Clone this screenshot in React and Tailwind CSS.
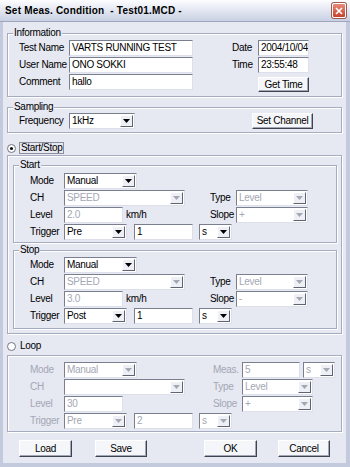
import React from 'react'

const FONT = "font-['Liberation_Sans',Arial,sans-serif]"
const DIM = 'text-[#a4a7b4]'

const Arrow = ({ dis }) => (
    <span className="w-[13px] my-[1px] mr-[1px] flex items-center justify-center bg-[#eef0f5] border-t border-l border-b border-r border-t-white border-l-white border-b-[#5f6372] border-r-[#5f6372]">
        <svg width="7" height="4" viewBox="0 0 7 4">
            <path d="M0 0h7L3.5 4z" fill={dis ? '#a4a7b4' : '#000'} />
        </svg>
    </span>
)

const Select = ({ w, value, dis }) => (
    <div className={`${w} h-[16px] flex items-stretch bg-white border-t border-l border-b border-r border-t-[#7a7f90] border-l-[#7a7f90] border-b-[#dde0ea] border-r-[#dde0ea]`}>
        <span className={`flex-1 pl-[2px] leading-[14px] overflow-hidden ${dis ? DIM : 'text-black'}`}>{value}</span>
        <Arrow dis={dis} />
    </div>
)

const Edit = ({ w, value, dis }) => (
    <div className={`${w} h-[16px] pl-[2px] leading-[14px] overflow-hidden bg-white border-t border-l border-b border-r border-t-[#7a7f90] border-l-[#7a7f90] border-b-[#dde0ea] border-r-[#dde0ea] ${dis ? DIM : 'text-black'}`}>
        {value}
    </div>
)

const Btn = ({ w, h = 'h-[16px]', children }) => (
    <div className={`${w} ${h} flex items-center justify-center bg-[#f5f6f9] border-t border-l border-b border-r border-t-white border-l-white border-b-[#3f4250] border-r-[#3f4250] shadow-[inset_-1px_-1px_0_#a3a7b5]`}>
        {children}
    </div>
)

const Group = ({ label, className, children }) => (
    <div className={`relative box-border border border-[#a6acbf] shadow-[inset_1px_1px_0_#ffffff,1px_1px_0_#ffffff] ${className}`}>
        {label && (
            <span className="absolute -top-[7px] left-[5px] px-[1px] leading-[12px] bg-[#e6e8f2]">{label}</span>
        )}
        {children}
    </div>
)

const Radio = ({ on }) => (
    <svg width="9" height="9" viewBox="0 0 9 9">
        <circle cx="4.5" cy="4.5" r="4" fill="#fff" stroke="#6f7485" strokeWidth="1" />
        {on && <circle cx="4.5" cy="4.5" r="1.6" fill="#111" />}
    </svg>
)

const Row = ({ label, dim, children }) => (
    <div className="flex items-center h-[16px]">
        <span className={`w-[34px] ${dim ? DIM : ''}`}>{label}</span>
        {children}
    </div>
)

const Condition = ({ label, level, slope, trigger, className }) => (
    <Group label={label} className={className}>
        <div className="flex flex-col gap-[1px]">
            <div className="flex">
                <div className="w-[180px]">
                    <Row label="Mode"><Select w="w-[73px]" value="Manual" /></Row>
                </div>
            </div>
            <div className="flex">
                <div className="w-[180px]">
                    <Row label="CH"><Select w="w-[121px]" value="SPEED" dis /></Row>
                </div>
                <div className="flex items-center h-[16px]">
                    <span className="w-[26px]">Type</span>
                    <Select w="w-[72px]" value="Level" dis />
                </div>
            </div>
            <div className="flex">
                <div className="w-[180px]">
                    <Row label="Level">
                        <Edit w="w-[59px]" value={level} dis />
                        <span className="ml-[3px]">km/h</span>
                    </Row>
                </div>
                <div className="flex items-center h-[16px]">
                    <span className="w-[26px]">Slope</span>
                    <Select w="w-[72px]" value={slope} dis />
                </div>
            </div>
            <Row label="Trigger">
                <Select w="w-[63px]" value={trigger} />
                <div className="ml-[7px]"><Edit w="w-[59px]" value="1" /></div>
                <div className="ml-[6px]"><Select w="w-[33px]" value="s" /></div>
            </Row>
        </div>
    </Group>
)

const App = () =>
{
    return (
        <div className={`w-[350px] h-[467px] flex flex-col bg-[#e6e8f2] text-[10px] tracking-[-0.3px] leading-[14px] whitespace-nowrap text-black ${FONT}`}>
            {/* Title bar */}
            <div className="h-[22px] flex items-center pl-[5px] pr-[4px] bg-linear-to-b from-[#fdfdff] to-[#c8d0e3] border-b border-[#9ea6bd]">
                <span className="text-[10px] font-bold tracking-[0.2px]">Set Meas. Condition&nbsp; - Test01.MCD -</span>
                <div className="ml-auto w-[14px] h-[15px] rounded-[2px] border border-white bg-linear-to-b from-[#e88a78] to-[#c8402c] flex items-center justify-center shadow-[0_0_0_1px_#9a5a52]">
                    <svg width="8" height="8" viewBox="0 0 8 8">
                        <path d="M1 1L7 7M7 1L1 7" stroke="#fff" strokeWidth="1.6" />
                    </svg>
                </div>
            </div>

            <div className="flex-1 flex flex-col border-l-[3px] border-r-[4px] border-b-[4px] border-[#c3cadd] px-[4px]">
                {/* Information */}
                <Group label="Information" className="mt-[11px] h-[64px] pt-[6px] pl-[11px] flex">
                    <div className="flex flex-col gap-[1px]">
                        <div className="flex items-center h-[16px]"><span className="w-[50px]">Test Name</span><Edit w="w-[124px]" value="VARTS RUNNING TEST" /></div>
                        <div className="flex items-center h-[16px]"><span className="w-[50px]">User Name</span><Edit w="w-[124px]" value="ONO SOKKI" /></div>
                        <div className="flex items-center h-[16px]"><span className="w-[50px]">Comment</span><Edit w="w-[124px]" value="hallo" /></div>
                    </div>
                    <div className="ml-[39px] flex flex-col gap-[1px]">
                        <div className="flex items-center h-[16px]"><span className="w-[26px]">Date</span><Edit w="w-[51px]" value="2004/10/04" /></div>
                        <div className="flex items-center h-[16px]"><span className="w-[26px]">Time</span><Edit w="w-[51px]" value="23:55:48" /></div>
                        <div className="flex mt-[3px] pl-[26px]"><Btn w="w-[51px]" h="h-[15px]">Get Time</Btn></div>
                    </div>
                </Group>

                {/* Sampling */}
                <Group label="Sampling" className="mt-[10px] h-[26px] pt-[5px] pl-[11px] flex items-start">
                    <div className="flex items-center h-[16px]"><span className="w-[50px]">Frequency</span><Select w="w-[66px]" value="1kHz" /></div>
                    <div className="ml-[117px]"><Btn w="w-[61px]">Set Channel</Btn></div>
                </Group>

                {/* Start / Stop */}
                <div className="mt-[9px] h-[12px] flex items-center">
                    <Radio on />
                    <span className="ml-[3px] px-[1px] h-[12px] leading-[10px] border border-[#8b8f9c]">Start/Stop</span>
                </div>
                <Group className="mt-[1px] h-[179px] pt-[9px] pl-[5px] pr-[4px]">
                    <Condition label="Start" level="2.0" slope="+" trigger="Pre" className="h-[78px] pt-[7px] pl-[16px]" />
                    <Condition label="Stop" level="3.0" slope="-" trigger="Post" className="mt-[7px] h-[79px] pt-[6px] pl-[16px]" />
                </Group>

                {/* Loop */}
                <div className="mt-[6px] h-[12px] flex items-center">
                    <Radio />
                    <span className="ml-[4px]">Loop</span>
                </div>
                <Group className="mt-[3px] h-[77px] pt-[6px] pl-[22px]">
                    <div className="flex flex-col gap-[1px]">
                        <div className="flex">
                            <div className="w-[183px]"><Row label="Mode" dim><Select w="w-[73px]" value="Manual" dis /></Row></div>
                            <div className="flex items-center h-[16px]">
                                <span className={`w-[29px] ${DIM}`}>Meas.</span>
                                <Edit w="w-[58px]" value="5" dis />
                                <div className="ml-[3px]"><Select w="w-[32px]" value="s" dis /></div>
                            </div>
                        </div>
                        <div className="flex">
                            <div className="w-[183px]"><Row label="CH" dim><Select w="w-[121px]" value="" dis /></Row></div>
                            <div className="flex items-center h-[16px]">
                                <span className={`w-[29px] ${DIM}`}>Type</span>
                                <Select w="w-[71px]" value="Level" dis />
                            </div>
                        </div>
                        <div className="flex">
                            <div className="w-[183px]"><Row label="Level" dim><Edit w="w-[59px]" value="30" dis /></Row></div>
                            <div className="flex items-center h-[16px]">
                                <span className={`w-[29px] ${DIM}`}>Slope</span>
                                <Select w="w-[71px]" value="+" dis />
                            </div>
                        </div>
                        <Row label="Trigger" dim>
                            <Select w="w-[63px]" value="Pre" dis />
                            <div className="ml-[7px]"><Edit w="w-[59px]" value="2" dis /></div>
                            <div className="ml-[6px]"><Select w="w-[33px]" value="s" dis /></div>
                        </Row>
                    </div>
                </Group>

                {/* Buttons */}
                <div className="mt-[8px] flex">
                    <div className="ml-[12px]"><Btn w="w-[53px]" h="h-[17px]">Load</Btn></div>
                    <div className="ml-[23px]"><Btn w="w-[52px]" h="h-[17px]">Save</Btn></div>
                    <div className="ml-[57px]"><Btn w="w-[53px]" h="h-[17px]">OK</Btn></div>
                    <div className="ml-[21px]"><Btn w="w-[52px]" h="h-[17px]">Cancel</Btn></div>
                </div>
            </div>
        </div>
    )
}

export default App
